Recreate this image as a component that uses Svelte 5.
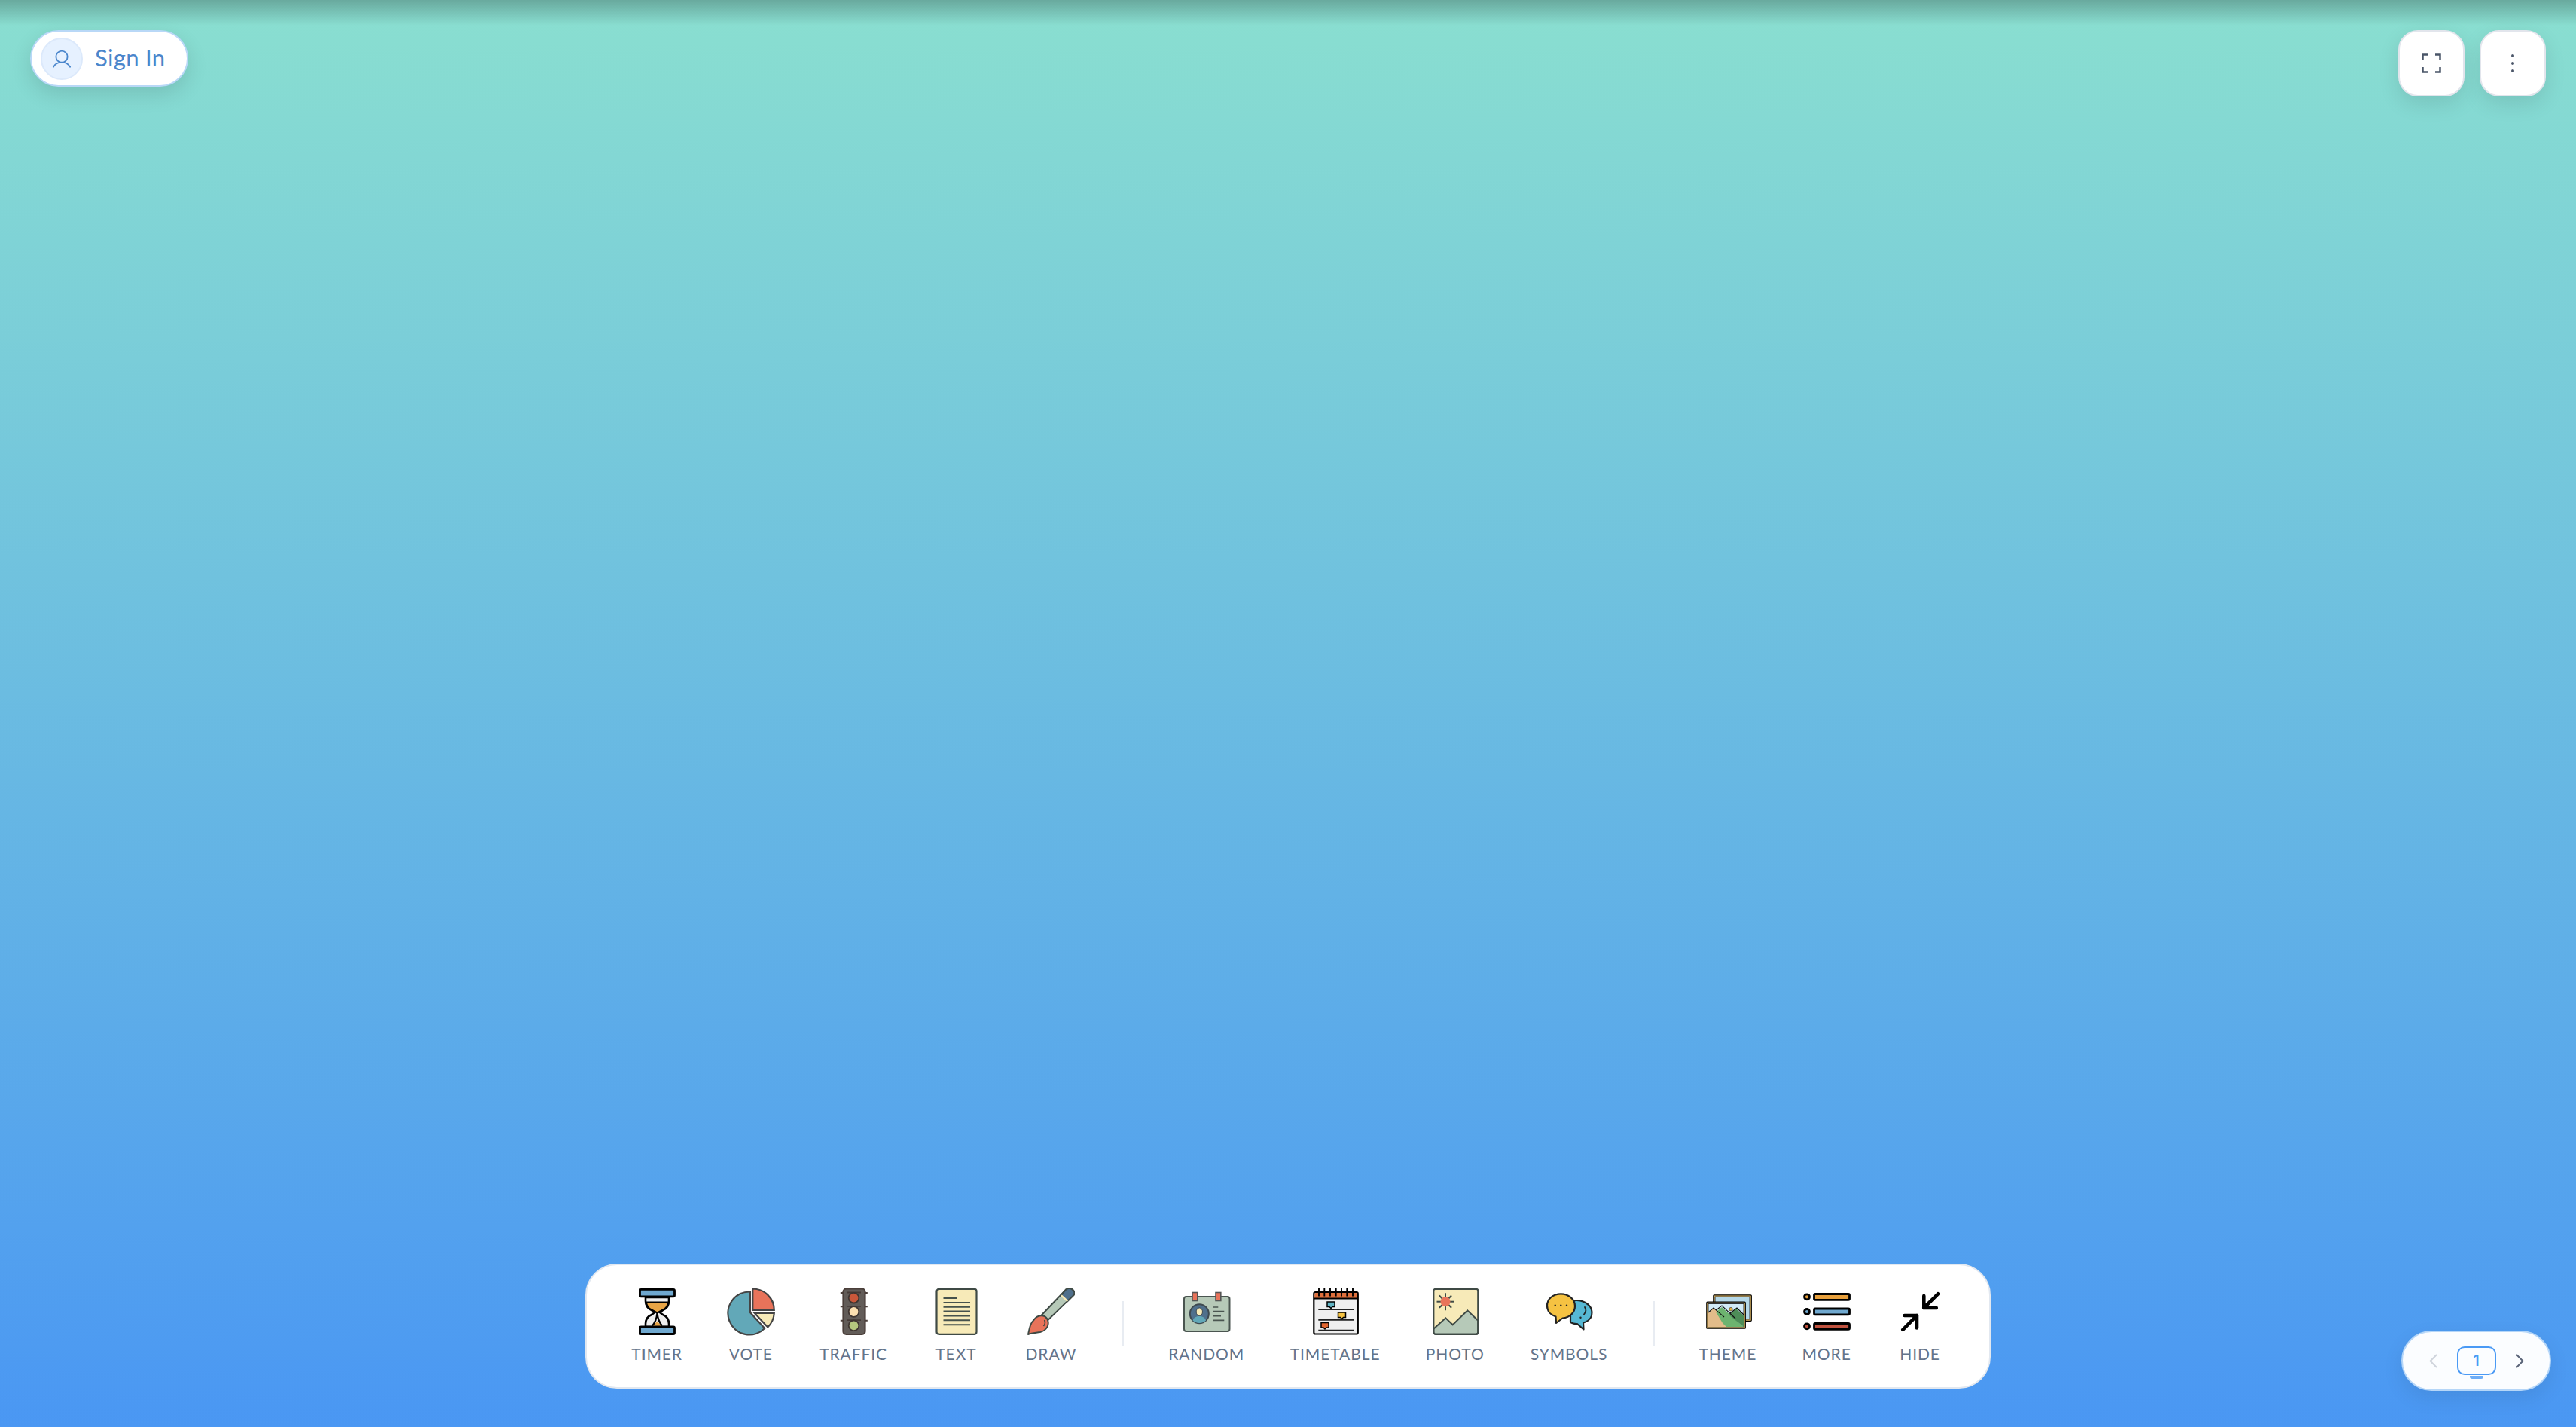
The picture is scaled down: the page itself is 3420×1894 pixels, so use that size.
<script>
  const groups = [
    [
      { label: 'TIMER', width: 68 },
      { label: 'VOTE', width: 59.4 },
      { label: 'TRAFFIC', width: 91.2 },
      { label: 'TEXT', width: 59.4 },
      { label: 'DRAW', width: 70.6 }
    ],
    [
      { label: 'RANDOM', width: 102 },
      { label: 'TIMETABLE', width: 117.8 },
      { label: 'PHOTO', width: 78.6 },
      { label: 'SYMBOLS', width: 101.8 }
    ],
    [
      { label: 'THEME', width: 76 },
      { label: 'MORE', width: 64.4 },
      { label: 'HIDE', width: 61.6 }
    ]
  ];
  const spiral = [10, 17.3, 25, 32.7, 40, 47.3, 55];
  const sunRays = [0, 45, 90, 135, 180, 225, 270, 315];
</script>

{#snippet icon(name)}
  <svg class="icon" viewBox="0 0 64 64" aria-hidden="true">
    {#if name === 'TIMER'}
      <path d="M17 13v5c0 6 3 10 8 12l4 3-4 3c-5 2-8 6-8 12v4h31v-4c0-6-3-10-8-12l-4-3 4-3c5-2 8-6 8-12v-5z" fill="#eee" stroke="#000" stroke-width="2.6"/>
      <path d="M18 19.500h29c-.5 5-3 8-7 10l-7.500 4-7.500-4c-4-2-6.500-5-7-10z" fill="#e8a546" stroke="#000" stroke-width="2"/>
      <path d="M26.500 51l6-6.500 6 6.500z" fill="#e8a546"/>
      <path d="M32.500 34c-.6 5-1.500 11-6.500 16.500M32.500 34c.6 5 1.500 11 6.500 16.500" fill="none" stroke="#000" stroke-width="2.200"/>
      <rect x="9.500" y="2.300" width="46" height="9.500" rx="1.500" fill="#6fa8cf" stroke="#000" stroke-width="2.800"/>
      <rect x="9.500" y="52" width="46" height="9.500" rx="1.500" fill="#6fa8cf" stroke="#000" stroke-width="2.800"/>
    {:else if name === 'VOTE'}
      <path d="M31 5.500A28.500 28.500 0 1 0 50.200 54L31 33z" fill="#62a8b8" stroke="#444" stroke-width="2.200"/>
      <path d="M34.300 1.500A28.500 28.500 0 0 1 62.800 30H34.300z" fill="#e8735a" stroke="#444" stroke-width="2.200"/>
      <path d="M37 34H62.800A28.500 28.500 0 0 1 54.300 52.500z" fill="#f7eab8" stroke="#444" stroke-width="2.200"/>
    {:else if name === 'TRAFFIC'}
      <path d="M14.800 7h36M14.800 25.300h36M14.800 43.700h36" stroke="#4b3f3a" stroke-width="2"/>
      <rect x="18.500" y="1.500" width="29" height="60.500" rx="4" fill="#625c58" stroke="#4b3f3a" stroke-width="2.200"/>
      <path d="M23 6.500h19M23 24.800h19M23 43.200h19" stroke="#463b37" stroke-width="1.800"/>
      <circle cx="32.500" cy="13.700" r="6.800" fill="#c9573a" stroke="#3f3531" stroke-width="1.800"/>
      <circle cx="32.500" cy="32" r="6.800" fill="#fbdfb0" stroke="#3f3531" stroke-width="1.800"/>
      <circle cx="32.500" cy="50.300" r="6.800" fill="#b5c77e" stroke="#3f3531" stroke-width="1.800"/>
    {:else if name === 'TEXT'}
      <rect x="6.500" y="1.800" width="53" height="60" rx="3" fill="#f7eab8" stroke="#3f4a45" stroke-width="2.200"/>
      <path d="M15.500 14h17.500M15.500 20h35.500M15.500 25.700h35.500M15.500 31.500h35.500M15.500 37.500h35.500M15.500 43.200h35.500M15.500 49.200h35.500" stroke="#46514c" stroke-width="2"/>
    {:else if name === 'DRAW'}
      <path d="M20.300 36L52 2.700c3-2 7-2 9.500.5 2.500 2.500 2.500 5 .5 7.200L28.700 42.700z" fill="#b6c9b8" stroke="#3f4a45" stroke-width="2"/>
      <path d="M46 10L52 2.700c3-2 7-2 9.500.5 2.500 2.500 2.500 5 .5 7.200L54.300 18z" fill="#50708c" stroke="#3f4a45" stroke-width="2"/>
      <path d="M46 10.300l8.300 7.700" stroke="#f7eab8" stroke-width="2.400"/>
      <path d="M2 62C4 53 5 47 9.500 43 14 36 24 35 27.500 42c3.500 7-1 15-9.500 17-6 1-11 1-16 3z" fill="#e8735a" stroke="#3f4a45" stroke-width="2" stroke-linejoin="round"/>
      <path d="M23.500 43c1.500 2.500 1 5.500-1 8" fill="none" stroke="#3f4a45" stroke-width="1.600"/>
    {:else if name === 'RANDOM'}
      <rect x="2" y="12" width="60.500" height="46" rx="3" fill="#b6c9b8" stroke="#4a5550" stroke-width="2"/>
      <rect x="13" y="6.500" width="6.800" height="11" fill="#e8735a" stroke="#555" stroke-width="1.600"/>
      <rect x="44" y="6.500" width="6.800" height="11" fill="#e8735a" stroke="#555" stroke-width="1.600"/>
      <circle cx="22.300" cy="34.700" r="12.500" fill="#50708c" stroke="#3f4a50" stroke-width="2"/>
      <path d="M13.500 43.500c1.500-4 5-5.500 8.800-5.500s7.300 1.500 8.800 5.500c-2.300 2.200-5.300 3.500-8.800 3.500s-6.500-1.300-8.800-3.500z" fill="#62a8b8"/>
      <ellipse cx="22.300" cy="32.200" rx="4.200" ry="5.300" fill="#f7eab8" stroke="#3f4a50" stroke-width="1"/>
      <path d="M40.700 26h6.600M40.700 31.700h14.600M40.700 37.700h10.300M40.700 43.300h14.600" stroke="#4a5550" stroke-width="1.700"/>
    {:else if name === 'TIMETABLE'}
      <rect x="3.300" y="6" width="58.500" height="55.500" rx="2" fill="#efefef" stroke="#000" stroke-width="2.200"/>
      <path d="M4.300 14V9c0-1.500 1-2 2-2h52.500c1 0 2 .5 2 2v5z" fill="#e0703c"/>
      <path d="M3.300 14.500h58.500" stroke="#000" stroke-width="2"/>
      {#each spiral as x}
        <path d="M{x} 1v10.500" stroke="#000" stroke-width="1.900"/>
      {/each}
      <path d="M9.300 29H56M9.300 42.700H56M9.300 56.700H56" stroke="#222" stroke-width="1.900"/>
      <path d="M21 19h10v6.500h-3l-2 2-2-2h-3z" fill="#62b4c4" stroke="#000" stroke-width="1.500"/>
      <path d="M35.500 33h10v6.500h-3l-2 2-2-2h-3z" fill="#f5c242" stroke="#000" stroke-width="1.500"/>
      <path d="M13 46.500h10v6.500h-3l-2 2-2-2h-3z" fill="#e2662f" stroke="#000" stroke-width="1.500"/>
    {:else if name === 'PHOTO'}
      <rect x="3.300" y="1.800" width="59" height="60" rx="2.500" fill="#f7eab8"/>
      <path d="M3.300 54.700L19.300 40.300l9.400 9 19.600-19L62.300 43.700V59c0 1.600-1.200 2.800-2.800 2.800H6.100c-1.600 0-2.800-1.200-2.800-2.800z" fill="#b6c9b8" stroke="#3f4a45" stroke-width="2"/>
      <rect x="3.300" y="1.800" width="59" height="60" rx="2.500" fill="none" stroke="#3f4a45" stroke-width="2.200"/>
      {#each sunRays as a}
        <path d="M19 18.700m0-6v-5.500" stroke="#3f4a45" stroke-width="2" transform="rotate({a} 19 18.700)"/>
      {/each}
      <circle cx="19" cy="18.700" r="6.500" fill="#e8735a"/>
    {:else if name === 'SYMBOLS'}
      <path d="M34 20.500c3-3.500 8-4 13-3 8 1.500 15 7 15.500 15 .3 6-3 11-8.500 13l-3 1 .5 9-8.500-7.500c-3 .3-6-.5-9-2z" fill="#56b8d4" stroke="#222" stroke-width="2.200" stroke-linejoin="round"/>
      <path d="M21.300 8.300C11 8.300 3 15 3 24c0 7 4.500 12.500 11.500 14.500L15 47l8.500-6.500C33 40 40 33 40 24.500 40 15 31 8.300 21.300 8.300z" fill="#f5c242" stroke="#222" stroke-width="2.200" stroke-linejoin="round"/>
      <circle cx="13.700" cy="23.700" r="1.200" fill="#222"/>
      <circle cx="21.300" cy="23.700" r="1.200" fill="#222"/>
      <circle cx="29" cy="23.700" r="1.200" fill="#222"/>
      <path d="M53 26c2 3 1.500 6.500-1 9.500" fill="none" stroke="#222" stroke-width="1.900" stroke-linecap="round"/>
      <circle cx="47.500" cy="39.700" r="1.200" fill="#222"/>
    {:else if name === 'THEME'}
      <rect x="12.800" y="9.800" width="50.500" height="34.500" rx="1" fill="#eec46a" stroke="#000" stroke-width="1.200"/>
      <rect x="15" y="12" width="46" height="30" fill="#b5d8e8" stroke="#333" stroke-width="1"/>
      <rect x="3.800" y="19.200" width="51.500" height="35" rx="1" fill="#eec46a" stroke="#000" stroke-width="1.200"/>
      <rect x="6" y="21.500" width="47" height="30.500" fill="#d2eaf6" stroke="#333" stroke-width="1"/>
      <path d="M6 52V33l7.500-6 14 12L43 52z" fill="#e2bc8a"/>
      <path d="M16 32.500l8-6.500 17 15.500 6 5.500 6 5H30l-5-5z" fill="#6db36f"/>
      <path d="M33 36l10-8 10 9v15z" fill="#4e8d58"/>
      <path d="M6 33l7-6 14 12M16.500 30l7.500-6 18 17M35 34l9-7 9 9" fill="none" stroke="#111" stroke-width="1.100"/>
      <circle cx="36" cy="28.700" r="2.300" fill="#e8b03e" stroke="#222" stroke-width=".6"/>
    {:else if name === 'MORE'}
      <circle cx="6" cy="12.300" r="3.500" fill="#e8a03c" stroke="#000" stroke-width="2.800"/>
      <circle cx="6" cy="32" r="3.500" fill="#6fa8cf" stroke="#000" stroke-width="2.800"/>
      <circle cx="6" cy="51.300" r="3.500" fill="#c0523f" stroke="#000" stroke-width="2.800"/>
      <rect x="15.500" y="8.500" width="47" height="7.800" rx="1.500" fill="#e8a03c" stroke="#000" stroke-width="2.800"/>
      <rect x="15.500" y="28" width="47" height="7.800" rx="1.500" fill="#6fa8cf" stroke="#000" stroke-width="2.800"/>
      <rect x="15.500" y="47.500" width="47" height="7.800" rx="1.500" fill="#c0523f" stroke="#000" stroke-width="2.800"/>
    {:else if name === 'HIDE'}
      <path d="M37.300 11v16h16.500M37.300 27L56 8.300M11.500 37H28v16.500M28 37L9.300 55.800" fill="none" stroke="#000" stroke-width="4.600" stroke-linecap="round" stroke-linejoin="round"/>
    {/if}
  </svg>
{/snippet}

<main class="page">
  <header class="top">
    <button class="sign-in">
      <span class="avatar">
        <svg viewBox="0 0 56 56" width="56" height="56" aria-hidden="true">
          <circle cx="28" cy="25" r="8.200" fill="none" stroke="#4a86cc" stroke-width="2"/>
          <path d="M16 39.500c2.500-4.500 7-6.500 12-6.500s9.500 2 12 6.500" fill="none" stroke="#4a86cc" stroke-width="2" stroke-linecap="round"/>
        </svg>
      </span>
      <span class="sign-text">Sign In</span>
    </button>
    <div class="top-actions">
      <button class="square" aria-label="Fullscreen">
        <svg viewBox="0 0 26 26" width="26" height="26" aria-hidden="true">
          <path d="M1.500 8V1.500H8M18 1.500h6.500V8M24.500 18v6.500H18M8 24.500H1.500V18" fill="none" stroke="#4a5568" stroke-width="2.500"/>
        </svg>
      </button>
      <button class="square" aria-label="Menu">
        <svg viewBox="0 0 8 28" width="8" height="28" aria-hidden="true">
          <circle cx="4" cy="4" r="2" fill="#4a5568"/>
          <circle cx="4" cy="14" r="2" fill="#4a5568"/>
          <circle cx="4" cy="24" r="2" fill="#4a5568"/>
        </svg>
      </button>
    </div>
  </header>

  <footer class="bottom">
    <nav class="toolbar">
      {#each groups as group, i}
        {#if i > 0}<span class="sep"></span>{/if}
        <div class="group">
          {#each group as item}
            <button class="tool" style="width:{item.width}px">
              {@render icon(item.label)}
              <span class="tool-label">{item.label}</span>
            </button>
          {/each}
        </div>
      {/each}
    </nav>

    <div class="pager">
      <svg class="chev" viewBox="0 0 11 19" width="11" height="19" aria-hidden="true">
        <path d="M10 1L1.500 9.500 10 18" fill="none" stroke="#cfd4dc" stroke-width="2"/>
      </svg>
      <div class="screen"><span class="screen-num">1</span></div>
      <svg class="chev" viewBox="0 0 11 19" width="11" height="19" aria-hidden="true">
        <path d="M1 1l8.500 8.500L1 18" fill="none" stroke="#5a6478" stroke-width="2"/>
      </svg>
    </div>
  </footer>
</main>

<style>
  :global(body) {
    margin: 0;
  }

  .page {
    position: relative;
    height: 100vh;
    display: flex;
    flex-direction: column;
    justify-content: space-between;
    overflow: hidden;
    font-family: Lato, "Open Sans", sans-serif;
    background:
      linear-gradient(180deg, rgba(0, 0, 0, 0.24), rgba(0, 0, 0, 0) 34px),
      linear-gradient(180deg, #8adfd0 0%, #4a97f3 100%);
  }

  button {
    font: inherit;
    padding: 0;
    background: none;
    border: 0;
  }

  .top {
    display: flex;
    justify-content: space-between;
    align-items: flex-start;
    padding: 40px 40px 0;
  }

  .sign-in {
    display: flex;
    align-items: center;
    gap: 16px;
    box-sizing: border-box;
    width: 210px;
    height: 75px;
    padding: 0 12px;
    background: #fff;
    border: 2px solid #b9d8f7;
    border-radius: 38px;
    box-shadow: 0 10px 28px rgba(0, 0, 0, 0.12);
  }

  .avatar {
    display: flex;
    box-sizing: border-box;
    align-items: center;
    justify-content: center;
    width: 56px;
    height: 56px;
    background: #e6f1ff;
    border: 2px solid #dce9fb;
    border-radius: 50%;
  }

  .sign-text {
    margin-top: -3px;
    font-size: 31px;
    letter-spacing: 0.3px;
    color: #4a86cc;
  }

  .top-actions {
    display: flex;
    gap: 20px;
  }

  .square {
    display: flex;
    align-items: center;
    justify-content: center;
    box-sizing: border-box;
    width: 88px;
    height: 88px;
    background: #fff;
    border: 2px solid #e2e5ec;
    border-radius: 26px;
    box-shadow: 0 10px 28px rgba(0, 0, 0, 0.1);
  }

  .bottom {
    display: flex;
    justify-content: center;
    padding-bottom: 51px;
  }

  .toolbar {
    display: flex;
    align-items: center;
    gap: 59px;
    box-sizing: border-box;
    height: 166px;
    padding: 0 61px 0 59px;
    background: #fff;
    border: 2px solid #e2e8f0;
    border-radius: 42px;
  }

  .group {
    display: flex;
    gap: 61px;
  }

  .sep + .group + .sep {
    margin-left: 2px;
  }

  .sep {
    width: 2px;
    height: 60px;
    margin-top: -6px;
    background: #e8ecf2;
  }

  .tool {
    display: flex;
    flex-direction: column;
    align-items: center;
    gap: 12px;
    margin-top: -3px;
  }

  .icon {
    flex: none;
    width: 64px;
    height: 64px;
  }

  .tool-label {
    font-size: 21px;
    line-height: 24px;
    letter-spacing: 0.9px;
    white-space: nowrap;
    color: #64748b;
  }

  /* floats over the canvas, bottom right */
  .pager {
    position: absolute;
    right: 33px;
    bottom: 48px;
    display: flex;
    align-items: center;
    justify-content: center;
    gap: 26px;
    box-sizing: border-box;
    width: 199px;
    height: 80px;
    background: #fbfdff;
    border: 2px solid #b5d6f8;
    border-radius: 40px;
    box-shadow: 0 10px 28px rgba(0, 0, 0, 0.08);
  }

  .chev {
    flex: none;
  }

  .screen {
    position: relative;
    display: flex;
    align-items: center;
    justify-content: center;
    box-sizing: border-box;
    width: 52px;
    height: 38px;
    border: 2px solid #4a9af5;
    border-radius: 10px;
  }

  .screen::after {
    content: "";
    position: absolute;
    left: 15px;
    bottom: -7px;
    width: 18px;
    height: 4px;
    background: #6eaef7;
    border-radius: 0 0 3px 3px;
  }

  .screen-num {
    font-family: Inter, sans-serif;
    font-size: 20px;
    font-weight: 600;
    color: #4a9af5;
  }
</style>
